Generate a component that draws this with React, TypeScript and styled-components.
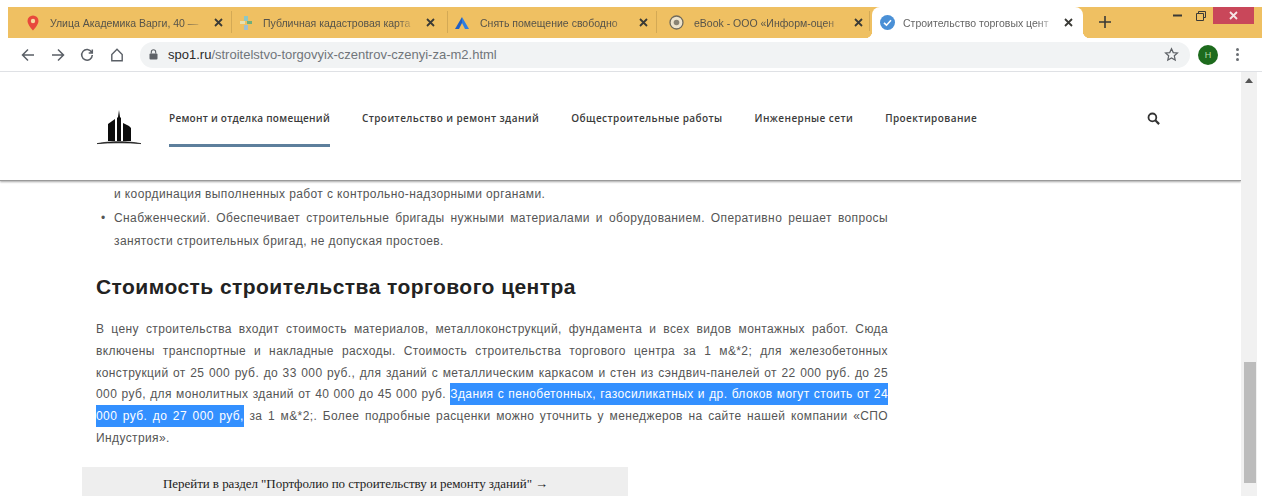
import { createGlobalStyle, styled } from "styled-components";

const GlobalStyle = createGlobalStyle`
    html, body {
        margin: 0;
        padding: 0;
        height: 100%;
        overflow: hidden;
        background: #ffffff;
    }
`;

const TABS = [
    { width: 212, inset: 6, pad: 9, title: "Улица Академика Варги, 40 —", icon: "pin" },
    { width: 216, inset: 7, pad: 13, title: "Публичная кадастровая карта", icon: "map" },
    { width: 209, inset: 6, pad: 9, title: "Снять помещение свободно", icon: "arrow" },
    { width: 213, inset: 12, pad: 7, title: "eBook - ООО «Информ-оцен", icon: "book" },
];

const NAV_ITEMS = [
    "Ремонт и отделка помещений",
    "Строительство и ремонт зданий",
    "Общестроительные работы",
    "Инженерные сети",
    "Проектирование",
];

function TabIcon({ kind }: { kind: string }) {
    if (kind === "pin") {
        return (
            <svg width="14" height="16" viewBox="0 0 14 16">
                <path d="M7 0.5a5.5 5.5 0 0 0-5.5 5.5c0 3.8 5.5 9.5 5.5 9.5s5.5-5.7 5.5-9.5A5.5 5.5 0 0 0 7 0.5z" fill="#e8483c" />
                <circle cx="7" cy="6" r="2.2" fill="#f5d9a0" />
            </svg>
        );
    }
    if (kind === "map") {
        return (
            <svg width="14" height="16" viewBox="0 0 14 16">
                <path d="M5 1h4v5H5z" fill="#8fc7c2" />
                <path d="M1 6h5v3H1z" fill="#e6e0b0" />
                <path d="M8 6h5v3H8z" fill="#6fae7c" />
                <path d="M5 10h4v5H5z" fill="#9fbfd0" />
            </svg>
        );
    }
    if (kind === "arrow") {
        return (
            <svg width="16" height="14" viewBox="0 0 16 14">
                <path d="M8 1L1 13h4l3-6z" fill="#1f5fc4" />
                <path d="M8 1l7 12h-4L8 7z" fill="#2f7fe0" />
            </svg>
        );
    }
    return (
        <svg width="15" height="15" viewBox="0 0 15 15">
            <circle cx="7.5" cy="7.5" r="6.5" fill="#ede3cc" stroke="#6f6a5c" strokeWidth="1.3" />
            <circle cx="7.5" cy="7.5" r="2.8" fill="#8a8474" />
        </svg>
    );
}

function CloseMark({ color = "#3a3a36" }: { color?: string }) {
    return (
        <svg width="9" height="9" viewBox="0 0 9 9">
            <path d="M1 1l7 7M8 1L1 8" stroke={color} strokeWidth="1.8" />
        </svg>
    );
}

function BuildingLogo() {
    return (
        <svg width="44" height="35" viewBox="0 0 44 35">
            <path d="M11 31V14l7-5v22z" fill="#0c0c0c" />
            <path d="M20 31V8l1-1 1-7 1 7 1 1v23z" fill="#0c0c0c" />
            <path d="M26 31V13l6 3 2 2v13z" fill="#0c0c0c" />
            <path d="M0 33.6C14 31 30 31 44 33.6 30 32.6 14 32.6 0 33.6z" fill="#0c0c0c" stroke="#0c0c0c" strokeWidth="0.6" />
        </svg>
    );
}

export default function App() {
    return (
        <>
            <GlobalStyle />
            <Window>
                <TabStrip>
                    {TABS.map((tab) => (
                        <Tab key={tab.title} $width={tab.width} $inset={tab.inset} $pad={tab.pad}>
                            <TabIcon kind={tab.icon} />
                            <TabTitle>{tab.title}</TabTitle>
                            <CloseMark />
                        </Tab>
                    ))}
                    <ActiveTab>
                        <svg width="15" height="15" viewBox="0 0 15 15">
                            <circle cx="7.5" cy="7.5" r="7.5" fill="#4a90d6" />
                            <path d="M4 7.8l2.5 2.4L11 5.2" fill="none" stroke="#ffffff" strokeWidth="1.6" />
                        </svg>
                        <TabTitle>Строительство торговых цент</TabTitle>
                        <CloseMark />
                    </ActiveTab>
                    <NewTab>
                        <svg width="12" height="12" viewBox="0 0 12 12">
                            <path d="M6 0v12M0 6h12" stroke="#3a3a36" strokeWidth="1.6" />
                        </svg>
                    </NewTab>
                    <WindowControls>
                        <WindowButton>
                            <svg width="9" height="3" viewBox="0 0 9 3">
                                <path d="M0 1.5h9" stroke="#3a3a36" strokeWidth="2" />
                            </svg>
                        </WindowButton>
                        <WindowButton>
                            <svg width="10" height="10" viewBox="0 0 10 10">
                                <path d="M2.5 2.5V0.5h7v6h-2M0.5 2.5h7v7h-7z" fill="none" stroke="#3a3a36" strokeWidth="1" />
                            </svg>
                        </WindowButton>
                        <CloseButton>
                            <CloseMark color="#f5e6e6" />
                        </CloseButton>
                    </WindowControls>
                </TabStrip>

                <Toolbar>
                    <NavIcons>
                        <svg width="14" height="14" viewBox="0 0 14 14">
                            <path d="M13 7H2M7 1.5L1.5 7 7 12.5" fill="none" stroke="#5a5f66" strokeWidth="1.5" />
                        </svg>
                        <svg width="14" height="14" viewBox="0 0 14 14">
                            <path d="M1 7h11M7 1.5L12.5 7 7 12.5" fill="none" stroke="#5a5f66" strokeWidth="1.5" />
                        </svg>
                        <svg width="14" height="14" viewBox="0 0 14 14">
                            <path d="M11.6 4.2A5.3 5.3 0 1 0 12.3 7M12.3 1.5v3.6H8.7" fill="none" stroke="#5a5f66" strokeWidth="1.5" />
                        </svg>
                        <svg width="14" height="14" viewBox="0 0 14 14">
                            <path d="M7 1.3L1.8 6.5v6.2h10.4V6.5z" fill="none" stroke="#5a5f66" strokeWidth="1.4" />
                        </svg>
                    </NavIcons>
                    <AddressBar>
                        <svg width="9" height="11" viewBox="0 0 9 11">
                            <rect x="0.5" y="4.5" width="8" height="6" rx="1" fill="#5f6368" />
                            <path d="M2.3 4.5V3a2.2 2.2 0 0 1 4.4 0v1.5" fill="none" stroke="#5f6368" strokeWidth="1.1" />
                        </svg>
                        <Url>
                            <b>spo1.ru</b>/stroitelstvo-torgovyix-czentrov-czenyi-za-m2.html
                        </Url>
                        <svg width="15" height="15" viewBox="0 0 24 24">
                            <path d="M12 2.8l2.8 6.1 6.7.7-5 4.5 1.4 6.6L12 17.4l-5.9 3.3 1.4-6.6-5-4.5 6.7-.7z" fill="none" stroke="#5f6368" strokeWidth="2" />
                        </svg>
                    </AddressBar>
                    <Avatar>Н</Avatar>
                    <Kebab>
                        <i />
                        <i />
                        <i />
                    </Kebab>
                </Toolbar>

                <Viewport>
                    <Page>
                        <SiteHeader>
                            <LogoLink>
                                <BuildingLogo />
                            </LogoLink>
                            <SiteNav>
                                {NAV_ITEMS.map((item, index) => (
                                    <NavItem key={item} $active={index === 0}>
                                        {item}
                                    </NavItem>
                                ))}
                            </SiteNav>
                            <SearchButton>
                                <svg width="13" height="13" viewBox="0 0 13 13">
                                    <circle cx="5.4" cy="5.4" r="3.9" fill="none" stroke="#333333" strokeWidth="1.8" />
                                    <path d="M8.3 8.3l3.8 3.8" stroke="#333333" strokeWidth="2.2" />
                                </svg>
                            </SearchButton>
                        </SiteHeader>

                        <Article>
                            <BulletList>
                                <BulletText>и координация выполненных работ с контрольно-надзорными органами.</BulletText>
                                <BulletItem>
                                    <JustifiedLine>
                                        Снабженческий. Обеспечивает строительные бригады нужными материалами и оборудованием. Оперативно решает вопросы
                                    </JustifiedLine>
                                </BulletItem>
                                <BulletText>занятости строительных бригад, не допуская простоев.</BulletText>
                            </BulletList>

                            <Heading>Стоимость строительства торгового центра</Heading>

                            <Paragraph>
                                <JustifiedLine>В цену строительства входит стоимость материалов, металлоконструкций, фундамента и всех видов монтажных работ. Сюда</JustifiedLine>
                                <JustifiedLine>включены транспортные и накладные расходы. Стоимость строительства торгового центра за 1 м&amp;*2; для железобетонных</JustifiedLine>
                                <JustifiedLine>конструкций от 25 000 руб. до 33 000 руб., для зданий с металлическим каркасом и стен из сэндвич-панелей от 22 000 руб. до 25</JustifiedLine>
                                <JustifiedLine>
                                    000 руб, для монолитных зданий от 40 000 до 45 000 руб. <Selected>Здания с пенобетонных, газосиликатных и др. блоков могут стоить от 24</Selected>
                                </JustifiedLine>
                                <JustifiedLine>
                                    <Selected>000 руб. до 27 000 руб,</Selected> за 1 м&amp;*2;. Более подробные расценки можно уточнить у менеджеров на сайте нашей компании «СПО
                                </JustifiedLine>
                                <div>Индустрия».</div>
                            </Paragraph>

                            <PortfolioLink>Перейти в раздел "Портфолио по строительству и ремонту зданий" →</PortfolioLink>
                        </Article>
                    </Page>
                    <Scrollbar>
                        <ScrollArrow />
                        <ScrollThumb />
                    </Scrollbar>
                </Viewport>
            </Window>
        </>
    );
}

const Window = styled.div`
    width: 1262px;
    height: 496px;
    padding-top: 7px;
    box-sizing: border-box;
    display: flex;
    flex-direction: column;
    overflow: hidden;
    font-family: "Liberation Sans", Arial, sans-serif;
`;

const TabStrip = styled.div`
    height: 31px;
    margin-left: 8px;
    padding-left: 12px;
    flex-shrink: 0;
    display: flex;
    align-items: flex-start;
    background: #efc062;
`;

const Tab = styled.div<{ $width: number; $inset: number; $pad: number }>`
    width: ${(p) => p.$width}px;
    height: 31px;
    box-sizing: border-box;
    padding: 0 ${(p) => p.$pad}px 0 ${(p) => p.$inset}px;
    display: flex;
    align-items: center;
    gap: 10px;
    color: #56534a;
    font-size: 10.5px;
    background: linear-gradient(#d3a955, #d3a955) right 4px / 1px 22px no-repeat;
    svg {
        flex-shrink: 0;
    }
`;

// the bottom flares are quarter circles cut out of the strip colour
const ActiveTab = styled.div`
    width: 211px;
    height: 31px;
    box-sizing: border-box;
    padding: 0 10px 0 8px;
    margin-left: 2px;
    display: flex;
    align-items: center;
    gap: 8px;
    color: #666666;
    font-size: 10.5px;
    background: #ffffff;
    border-radius: 8px 8px 0 0;
    position: relative;
    svg {
        flex-shrink: 0;
    }
    &::before,
    &::after {
        content: "";
        position: absolute;
        bottom: 0;
        width: 7px;
        height: 7px;
    }
    &::before {
        left: -7px;
        background: radial-gradient(circle at 0 0, #efc062 7px, #ffffff 7.5px);
    }
    &::after {
        right: -7px;
        background: radial-gradient(circle at 100% 0, #efc062 7px, #ffffff 7.5px);
    }
`;

const TabTitle = styled.span`
    flex: 1;
    min-width: 0;
    white-space: nowrap;
    mask-image: linear-gradient(to right, #000 88%, transparent);
`;

const NewTab = styled.div`
    margin: 9px 0 0 16px;
    display: flex;
`;

const WindowControls = styled.div`
    margin-left: auto;
    height: 100%;
    padding-right: 8px;
    display: flex;
    align-items: flex-start;
`;

const WindowButton = styled.div`
    width: 24px;
    height: 17px;
    display: flex;
    align-items: center;
    justify-content: center;
`;

const CloseButton = styled.div`
    width: 41px;
    height: 17px;
    display: flex;
    align-items: center;
    justify-content: center;
    background: #c9475a;
`;

const Toolbar = styled.div`
    height: 34px;
    flex-shrink: 0;
    box-sizing: border-box;
    padding-left: 21px;
    display: flex;
    align-items: center;
    background: #ffffff;
    border-bottom: 1px solid #dfe1e5;
`;

const NavIcons = styled.div`
    width: 119px;
    display: flex;
    align-items: center;
    gap: 15.5px;
`;

const AddressBar = styled.div`
    width: 1050px;
    height: 26px;
    box-sizing: border-box;
    padding: 0 11px 0 9px;
    display: flex;
    align-items: center;
    gap: 10px;
    background: #f1f3f4;
    border-radius: 13px;
`;

const Url = styled.span`
    flex: 1;
    font-size: 13px;
    color: #70757a;
    b {
        font-weight: normal;
        color: #2a2a2a;
    }
`;

const Avatar = styled.div`
    width: 20px;
    height: 20px;
    margin-left: 8px;
    border-radius: 50%;
    display: flex;
    align-items: center;
    justify-content: center;
    color: #b7dca8;
    font-size: 9px;
    background: #1d6b1d;
`;

const Kebab = styled.div`
    margin-left: 18px;
    display: flex;
    flex-direction: column;
    gap: 2px;
    i {
        width: 3px;
        height: 3px;
        border-radius: 50%;
        background: #6a6e73;
    }
`;

const Viewport = styled.div`
    flex: 1;
    min-height: 0;
    display: flex;
`;

const Page = styled.div`
    width: 1241px;
    display: flex;
    flex-direction: column;
    overflow: hidden;
`;

const SiteHeader = styled.header`
    height: 109px;
    flex-shrink: 0;
    box-sizing: border-box;
    padding-left: 97px;
    display: flex;
    background: #ffffff;
    border-bottom: 1px solid #9a9a9a;
    box-shadow: 0 1px 2px rgba(0, 0, 0, 0.35);
    position: relative;
`;

const LogoLink = styled.div`
    width: 72px;
    padding-top: 38px;
`;

const SiteNav = styled.nav`
    display: flex;
    gap: 32px;
    height: 75px;
`;

const NavItem = styled.div<{ $active: boolean }>`
    padding-top: 39px;
    box-sizing: border-box;
    height: 100%;
    font-family: "Open Sans", sans-serif;
    font-size: 10px;
    font-weight: 600;
    letter-spacing: ${(p) => (p.$active ? "0.26px" : "0.42px")};
    color: #3b3b3b;
    white-space: nowrap;
    border-bottom: 3px solid ${(p) => (p.$active ? "#5d7f9c" : "transparent")};
`;

const SearchButton = styled.div`
    margin-left: auto;
    margin-right: 81px;
    padding-top: 39px;
`;

const Article = styled.main`
    width: 792px;
    padding: 6px 0 0 96px;
    color: #555555;
    font-size: 12px;
    letter-spacing: 0.39px;
`;

const BulletList = styled.div`
    padding-left: 18px;
    display: flex;
    flex-direction: column;
    gap: 9.5px;
`;

const BulletText = styled.div`
    line-height: 14px;
    white-space: nowrap;
`;

const BulletItem = styled.div`
    line-height: 14px;
    position: relative;
    &::before {
        content: "•";
        position: absolute;
        left: -13px;
    }
`;

const JustifiedLine = styled.div`
    text-align: justify;
    text-align-last: justify;
`;

const Selected = styled.span`
    color: #ffffff;
    background: #3390ff;
    padding: 4px 0;
`;

const Heading = styled.h2`
    margin: 26px 0 19px;
    font-size: 21px;
    line-height: 26px;
    font-weight: bold;
    letter-spacing: 0.45px;
    color: #222222;
`;

const Paragraph = styled.div`
    line-height: 21.8px;
`;

const PortfolioLink = styled.div`
    width: 546px;
    height: 30px;
    margin: 17px 0 0 -14px;
    box-sizing: border-box;
    padding: 9px 0 0 81px;
    background: #eeeeee;
    color: #1c1c1c;
    font-family: "Liberation Serif", serif;
    font-size: 13px;
    letter-spacing: -0.05px;
    white-space: nowrap;
`;

const Scrollbar = styled.div`
    width: 16px;
    background: #f1f1f1;
    position: relative;
`;

const ScrollArrow = styled.div`
    position: absolute;
    top: 6px;
    left: 4px;
    border-left: 4px solid transparent;
    border-right: 4px solid transparent;
    border-bottom: 5px solid #555555;
`;

const ScrollThumb = styled.div`
    position: absolute;
    top: 290px;
    left: 3px;
    width: 12px;
    height: 121px;
    background: #bcbcbc;
`;
